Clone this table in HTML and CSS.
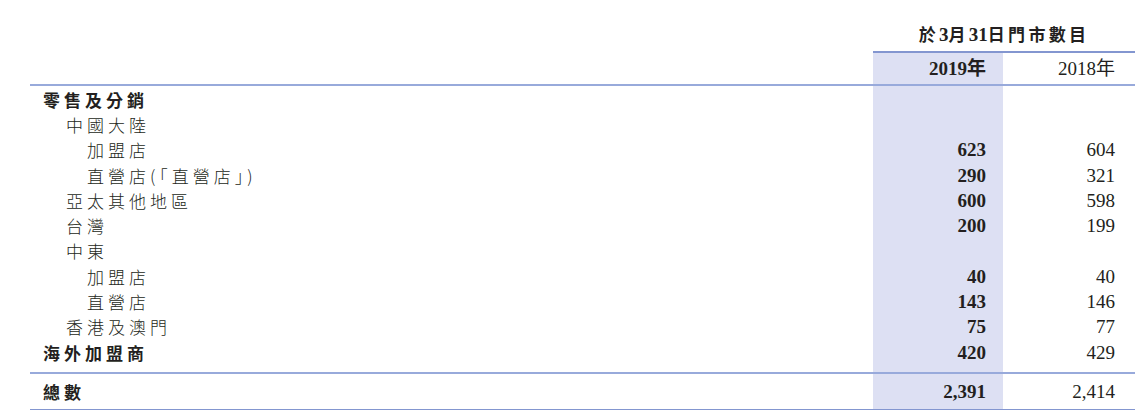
FILE: index.html
```html
<!DOCTYPE html>
<html lang="zh-Hant">
<head>
<meta charset="utf-8">
<link rel="stylesheet" href="styles.css">
</head>
<body>
<table class="tbl">
  <colgroup>
    <col class="c-label">
    <col class="c-cur">
    <col class="c-prev">
  </colgroup>
  <thead>
    <tr class="r-title">
      <th></th>
      <th colspan="2" class="title">於<b class="num">3</b>月<b class="num">31</b>日門市數目</th>
    </tr>
    <tr class="r-year">
      <th class="line"></th>
      <th class="line cur num-cell"><b>2019年</b></th>
      <th class="line num-cell">2018年</th>
    </tr>
  </thead>
  <tbody>
    <tr class="first"><td class="lbl l0 strong">零售及分銷</td><td class="cur"></td><td></td></tr>
    <tr><td class="lbl l1">中國大陸</td><td class="cur"></td><td></td></tr>
    <tr><td class="lbl l2">加盟店</td><td class="cur num-cell"><b>623</b></td><td class="num-cell">604</td></tr>
    <tr><td class="lbl l2">直營店(「直營店」)</td><td class="cur num-cell"><b>290</b></td><td class="num-cell">321</td></tr>
    <tr><td class="lbl l1">亞太其他地區</td><td class="cur num-cell"><b>600</b></td><td class="num-cell">598</td></tr>
    <tr><td class="lbl l1">台灣</td><td class="cur num-cell"><b>200</b></td><td class="num-cell">199</td></tr>
    <tr><td class="lbl l1">中東</td><td class="cur"></td><td></td></tr>
    <tr><td class="lbl l2">加盟店</td><td class="cur num-cell"><b>40</b></td><td class="num-cell">40</td></tr>
    <tr><td class="lbl l2">直營店</td><td class="cur num-cell"><b>143</b></td><td class="num-cell">146</td></tr>
    <tr><td class="lbl l1">香港及澳門</td><td class="cur num-cell"><b>75</b></td><td class="num-cell">77</td></tr>
    <tr class="last"><td class="lbl l0 strong">海外加盟商</td><td class="cur num-cell"><b>420</b></td><td class="num-cell">429</td></tr>
    <tr class="total"><td class="lbl l0 strong">總數</td><td class="cur num-cell"><b>2,391</b></td><td class="num-cell">2,414</td></tr>
  </tbody>
</table>
</body>
</html>
```
FILE: styles.css
```css
html, body {
  margin: 0;
  padding: 0;
  background: #fff;
}
body {
  padding-left: 30px;
  color: #231f20;
  font-family: "Noto Sans CJK TC", "Noto Sans CJK SC", sans-serif;
}
.tbl {
  border-collapse: separate;
  border-spacing: 0;
  width: 1105px;
  table-layout: fixed;
}
.c-label { width: 843px; }
.c-cur { width: 130px; }
.c-prev { width: 132px; }
th, td {
  padding: 0;
  font-weight: 400;
  overflow: hidden;
}
.num {
  font-family: "Liberation Serif", "Times New Roman", serif;
}
b { font-weight: 700; }
.r-title th {
  height: 47px;
  vertical-align: bottom;
}
.title {
  border-bottom: 2px solid #8396d0;
  font-size: 17px;
  letter-spacing: 3.3px;
  font-weight: 700;
  text-align: center;
  padding-bottom: 4px;
  line-height: 24px;
}
.title .num {
  font-size: 19px;
  letter-spacing: 0;
}
.r-year th {
  height: 31px;
  border-bottom: 2px solid #98aadb;
  line-height: 24px;
  vertical-align: middle;
}
.cur {
  background: #dde0f3;
}
.num-cell {
  font-family: "Liberation Serif", "Noto Sans CJK TC", serif;
  text-align: right;
  padding-right: 17px;
  font-size: 19px;
}
td:last-child.num-cell, th:last-child.num-cell {
  padding-right: 20px;
}
tbody td {
  height: 25.3px;
  line-height: 20px;
  vertical-align: middle;
}
.lbl {
  font-size: 17px;
  letter-spacing: 4px;
  white-space: nowrap;
  font-weight: 300;
}
.lbl.strong { font-weight: 700; }
.l0 { padding-left: 13px; }
.l1 { padding-left: 36px; }
.l2 { padding-left: 57px; }
tr.first td { padding-top: 1px; }
tr.last td {
  padding-bottom: 7px;
  border-bottom: 2px solid #98aadb;
}
tr.total td {
  height: 34.5px;
  border-bottom: 2px solid #8396d0;
}
```
